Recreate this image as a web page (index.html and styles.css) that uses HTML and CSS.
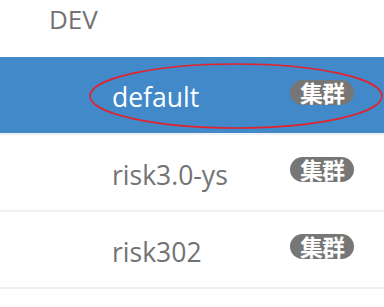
FILE: index.html
```html
<!DOCTYPE html>
<html lang="zh-CN">
<head>
  <meta charset="UTF-8" />
  <meta name="viewport" content="width=device-width, initial-scale=1.0"/>
  <title>DEV</title>
  <link rel="stylesheet" href="styles.css">
</head>
<body>

  <!-- GROUP TITLE -->
  <div class="group-title">DEV</div>

  <!-- CLUSTER LIST -->
  <ul class="cluster-list">
    <li class="cluster active">
      <span class="cluster-name">default</span>
      <span class="badge">集群</span>
      <!-- RED MARK DRAWN OVER THE ROW -->
      <svg class="mark" width="300" height="70" viewBox="0 0 300 70">
        <ellipse cx="147" cy="33" rx="146" ry="32" fill="none" stroke="#e2232d" stroke-width="1.6"/>
      </svg>
    </li>
    <li class="cluster">
      <span class="cluster-name">risk3.0-ys</span>
      <span class="badge">集群</span>
    </li>
    <li class="cluster">
      <span class="cluster-name">risk302</span>
      <span class="badge">集群</span>
    </li>
    <li class="cluster">
      <span class="cluster-name"></span>
    </li>
  </ul>

</body>
</html>
```

FILE: styles.css
```css
body {
  margin: 0;
  background: #ffffff;
  font-family: "Open Sans", "Noto Sans CJK SC", sans-serif;
  overflow: hidden;
}

/* GROUP TITLE */
.group-title {
  height: 55px;
  padding: 2px 0 0 49px;
  font-size: 26px;
  line-height: 35px;
  color: #737373;
}

/* LIST */
.cluster-list {
  list-style: none;
  margin: 0;
  padding: 0;
}

.cluster {
  position: relative;
  display: flex;
  align-items: center;
  height: 77px;
  padding-left: 112px;
  border-bottom: 2px solid #eef1f5;
  box-sizing: border-box;
}

.cluster:first-child {
  height: 78px;
}

.cluster.active {
  background: #4289c9;
}

.cluster-name {
  width: 178px;
  padding-top: 4px;
  font-size: 26.5px;
  color: #737373;
}

.active .cluster-name {
  color: #ffffff;
}

.badge {
  margin-bottom: 6px;
  width: 64px;
  height: 25px;
  border-radius: 13px;
  background: #767676;
  color: #ffffff;
  font-family: "Noto Sans CJK SC", sans-serif;
  font-weight: 700;
  font-size: 23px;
  line-height: 25px;
  letter-spacing: -1px;
  text-align: center;
}

/* ANNOTATION */
.mark {
  position: absolute;
  left: 89px;
  top: 6px;
}
```
